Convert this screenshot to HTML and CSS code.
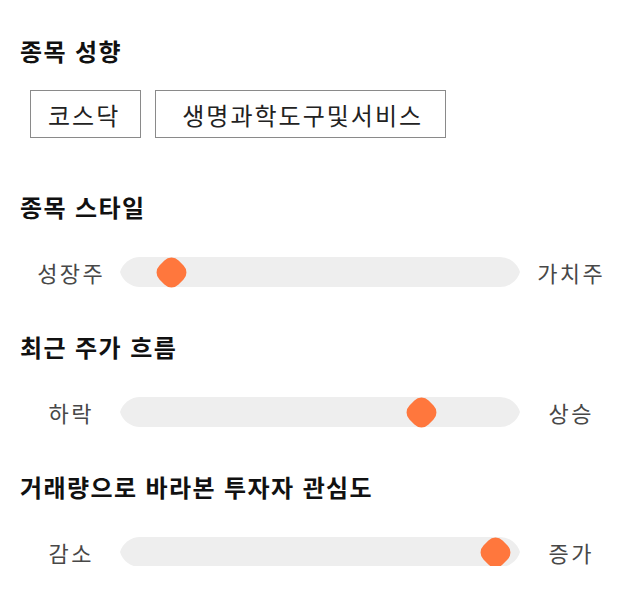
FILE: index.html
```html
<!DOCTYPE html>
<html lang="ko">
<head>
<meta charset="utf-8">
<link rel="stylesheet" href="styles.css">
</head>
<body>
<main class="page">
  <section class="group">
    <h2 class="title">종목 성향</h2>
    <div class="chips">
      <span class="chip">코스닥</span>
      <span class="chip chip-wide">생명과학도구및서비스</span>
    </div>
  </section>

  <section class="group group-slider first">
    <h2 class="title">종목 스타일</h2>
    <div class="slider-row">
      <span class="label">성장주</span>
      <div class="track">
        <svg class="track-bg" width="400" height="30" viewBox="0 0 400 30"><path d="M20,0 H380 A21,21 0 0 1 400,15 A21,21 0 0 1 380,30 H20 A21,21 0 0 1 0,15 A21,21 0 0 1 20,0 Z" fill="#eeeeee"/></svg>
        <span class="thumb" style="left: 36px"></span>
      </div>
      <span class="label">가치주</span>
    </div>
  </section>

  <section class="group group-slider">
    <h2 class="title">최근 주가 흐름</h2>
    <div class="slider-row">
      <span class="label">하락</span>
      <div class="track">
        <svg class="track-bg" width="400" height="30" viewBox="0 0 400 30"><path d="M20,0 H380 A21,21 0 0 1 400,15 A21,21 0 0 1 380,30 H20 A21,21 0 0 1 0,15 A21,21 0 0 1 20,0 Z" fill="#eeeeee"/></svg>
        <span class="thumb" style="left: 286px"></span>
      </div>
      <span class="label">상승</span>
    </div>
  </section>

  <section class="group group-slider">
    <h2 class="title">거래량으로 바라본 투자자 관심도</h2>
    <div class="slider-row">
      <span class="label">감소</span>
      <div class="track">
        <svg class="track-bg" width="400" height="30" viewBox="0 0 400 30"><path d="M20,0 H380 A21,21 0 0 1 400,15 A21,21 0 0 1 380,30 H20 A21,21 0 0 1 0,15 A21,21 0 0 1 20,0 Z" fill="#eeeeee"/></svg>
        <span class="thumb" style="left: 360px"></span>
      </div>
      <span class="label">증가</span>
    </div>
  </section>
</main>
</body>
</html>
```

FILE: styles.css
```css
* { box-sizing: border-box; }
html, body {
  margin: 0;
  padding: 0;
  background: #ffffff;
}
body {
  font-family: "Noto Sans CJK KR", "Noto Sans", sans-serif;
  color: #111111;
}
.page {
  padding: 34px 20px 0 20px;
}
.title {
  margin: 0;
  font-size: 24px;
  font-weight: 700;
  line-height: 34px;
  letter-spacing: 1.4px;
  color: #111111;
}
.chips {
  display: flex;
  gap: 14px;
  margin: 22px 0 0 10px;
}
.chip {
  display: flex;
  align-items: center;
  justify-content: center;
  height: 48px;
  padding: 0 20px 0 17px;
  border: 1px solid #8a8a8a;
  font-size: 24px;
  letter-spacing: 2px;
  color: #222222;
}
.chip-wide {
  padding: 0 22px 0 26px;
}
.group-slider {
  margin-top: 44px;
}
.group-slider.first {
  margin-top: 52px;
}
.slider-row {
  display: grid;
  grid-template-columns: 100px 400px 100px;
  align-items: center;
  margin-top: 32px;
  height: 30px;
}
.label {
  text-align: center;
  font-size: 22px;
  letter-spacing: 2.4px;
  text-indent: 2.4px;
  color: #484848;
}
.track {
  position: relative;
  width: 400px;
  height: 30px;
}
.track-bg {
  display: block;
}
.thumb {
  position: absolute;
  top: 0;
  width: 30px;
  height: 30px;
  display: flex;
  align-items: center;
  justify-content: center;
}
.thumb::before {
  content: "";
  width: 27px;
  height: 27px;
  flex: none;
  border-radius: 10px;
  background: #ff773d;
  transform: rotate(45deg);
}
```
